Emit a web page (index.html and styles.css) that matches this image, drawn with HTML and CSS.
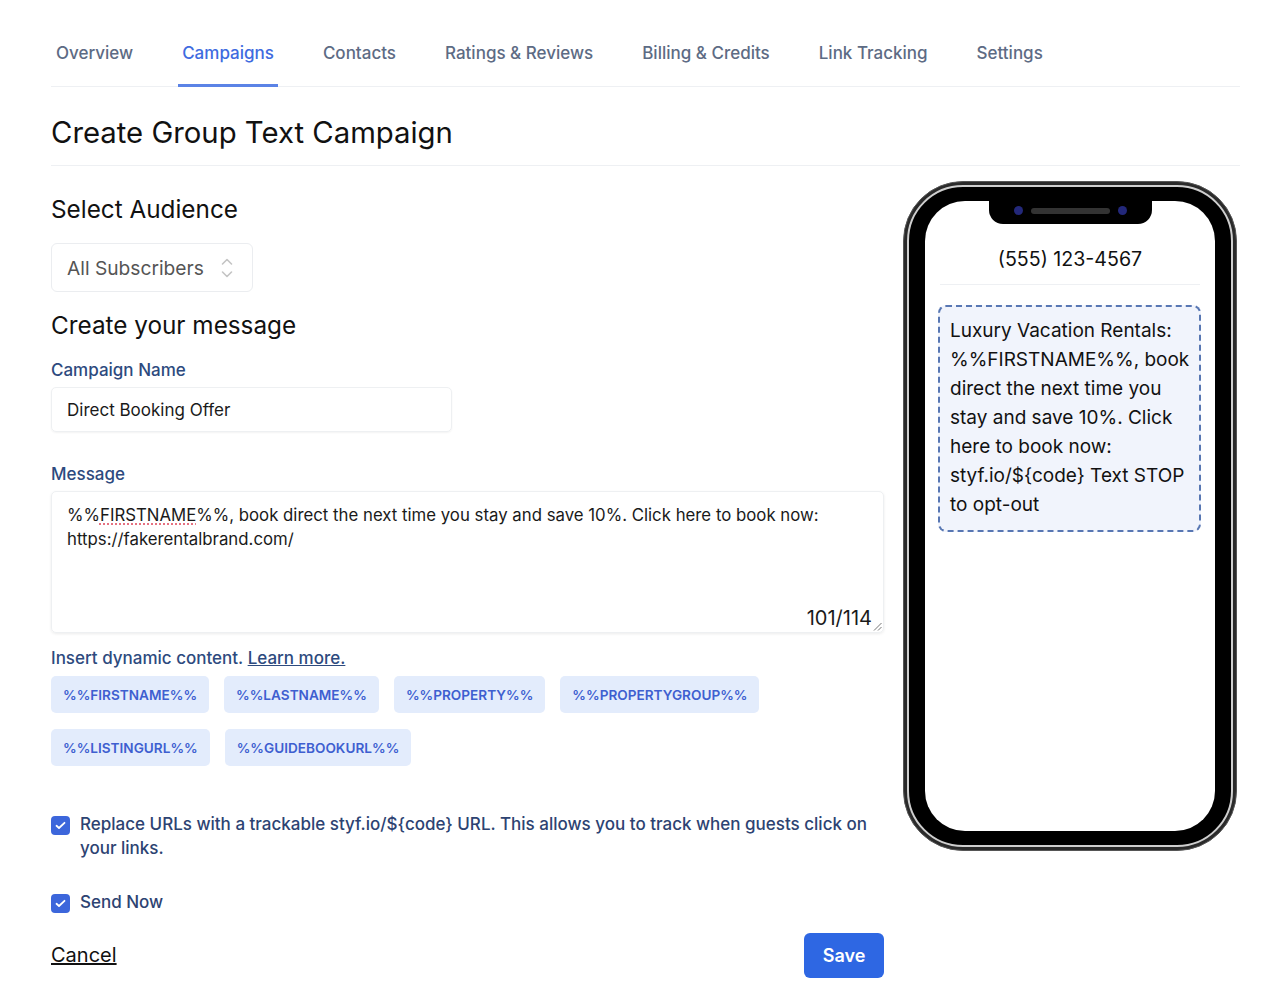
FILE: index.html
```html
<!DOCTYPE html>
<html lang="en">

<head>
    <meta charset="UTF-8">
    <title>Create Group Text Campaign</title>
    <link rel="stylesheet" href="styles.css">
</head>

<body>
    <div class="page">
        <ul class="tabs">
            <li>Overview</li>
            <li class="active">Campaigns</li>
            <li>Contacts</li>
            <li>Ratings &amp; Reviews</li>
            <li>Billing &amp; Credits</li>
            <li>Link Tracking</li>
            <li>Settings</li>
        </ul>

        <h1 class="title">Create Group Text Campaign</h1>

        <div class="content">
            <div class="form">
                <h2>Select Audience</h2>
                <div class="select">
                    <span>All Subscribers</span>
                    <svg width="12" height="22" viewBox="0 0 12 22" fill="none" stroke="#c4c4c4" stroke-width="1.6" stroke-linecap="round" stroke-linejoin="round">
                        <polyline points="1.5,7 6,2.5 10.5,7"></polyline>
                        <polyline points="1.5,15 6,19.5 10.5,15"></polyline>
                    </svg>
                </div>

                <h2 class="sub">Create your message</h2>
                <label class="label">Campaign Name</label>
                <div class="input">Direct Booking Offer</div>

                <label class="label msg-label">Message</label>
                <div class="textarea">
                    <p>%%<span class="spell">FIRSTNAME</span>%%, book direct the next time you stay and save 10%. Click here to book now: https://fakerentalbrand.com/</p>
                    <div class="counter">
                        <span>101/114</span>
                        <svg width="10" height="10" viewBox="0 0 10 10" stroke="#777" stroke-width="1">
                            <line x1="9.5" y1="2" x2="2" y2="9.5"></line>
                            <line x1="9.5" y1="6" x2="6" y2="9.5"></line>
                        </svg>
                    </div>
                </div>

                <p class="hint">Insert dynamic content. <a href="#">Learn more.</a></p>
                <div class="chips">
                    <span class="chip">%%FIRSTNAME%%</span>
                    <span class="chip">%%LASTNAME%%</span>
                    <span class="chip">%%PROPERTY%%</span>
                    <span class="chip">%%PROPERTYGROUP%%</span>
                    <span class="chip">%%LISTINGURL%%</span>
                    <span class="chip">%%GUIDEBOOKURL%%</span>
                </div>

                <div class="check first">
                    <span class="box">
                        <svg width="11" height="9" viewBox="0 0 11 9" fill="none" stroke="#fff" stroke-width="1.8" stroke-linecap="round" stroke-linejoin="round"><polyline points="1.5,4.8 4,7 9.5,1.8"></polyline></svg>
                    </span>
                    <span>Replace URLs with a trackable styf.io/${code} URL. This allows you to track when guests click on your links.</span>
                </div>
                <div class="check second">
                    <span class="box">
                        <svg width="11" height="9" viewBox="0 0 11 9" fill="none" stroke="#fff" stroke-width="1.8" stroke-linecap="round" stroke-linejoin="round"><polyline points="1.5,4.8 4,7 9.5,1.8"></polyline></svg>
                    </span>
                    <span>Send Now</span>
                </div>

                <div class="actions">
                    <a href="#" class="cancel">Cancel</a>
                    <button class="save">Save</button>
                </div>
            </div>

            <div class="phone">
                <div class="rim">
                    <div class="screen">
                        <div class="notch">
                            <span class="cam"></span>
                            <span class="speaker"></span>
                            <span class="cam"></span>
                        </div>
                        <div class="number">(555) 123-4567</div>
                        <div class="bubble">Luxury Vacation Rentals: %%FIRSTNAME%%, book direct the next time you stay and save 10%. Click here to book now: styf.io/${code} Text STOP to opt-out</div>
                    </div>
                </div>
            </div>
        </div>
    </div>
</body>

</html>
```

FILE: styles.css
```css
* {
    margin: 0;
    padding: 0;
    box-sizing: border-box;
}

body {
    font-family: Inter, "Liberation Sans", sans-serif;
    color: #1a1a1a;
    background: #fff;
}

.page {
    padding: 0 45px 0 51px;
}

/* tabs */
.tabs {
    list-style: none;
    display: flex;
    gap: 41px;
    padding-left: 1px;
    border-bottom: 1px solid #eef0f3;
}

.tabs li {
    padding: 43px 4px 20px;
    font-size: 17px;
    line-height: 21px;
    font-weight: 500;
    color: #5d6b84;
    border-bottom: 3px solid transparent;
    margin-bottom: -1px;
}

.tabs li.active {
    color: #3e6be0;
    border-bottom-color: #5b83e6;
}

.title {
    margin-top: 28px;
    padding-bottom: 14px;
    font-size: 29.3px;
    line-height: 36px;
    font-weight: 400;
    color: #111;
    border-bottom: 1px solid #eef0f3;
}

.content {
    display: flex;
    gap: 19px;
    align-items: flex-start;
}

.form {
    width: 833px;
    padding-top: 28px;
}

h2 {
    font-size: 24.3px;
    line-height: 30px;
    font-weight: 400;
    color: #111;
}

.select {
    margin-top: 19px;
    width: 202px;
    height: 49px;
    border: 1px solid #ebedf0;
    border-radius: 6px;
    display: flex;
    align-items: center;
    justify-content: space-between;
    padding: 0 19px 0 15px;
    font-size: 19.2px;
    color: #555;
}

.sub {
    margin-top: 18px;
}

.label {
    display: block;
    margin-top: 19px;
    font-size: 17px;
    line-height: 22px;
    font-weight: 500;
    color: #2d4a7e;
}

.msg-label {
    margin-top: 31px;
}

.input {
    margin-top: 6px;
    width: 401px;
    height: 45px;
    border: 1px solid #eef0f2;
    border-radius: 5px;
    box-shadow: 0 1px 2px rgba(0, 0, 0, 0.05);
    padding: 0 15px;
    display: flex;
    align-items: center;
    font-size: 17px;
    color: #1a1a1a;
}

.textarea {
    margin-top: 6px;
    height: 142px;
    border: 1px solid #eef0f2;
    border-radius: 5px;
    box-shadow: 0 1px 3px rgba(0, 0, 0, 0.08);
    padding: 11px 1px 0 15px;
    display: flex;
    flex-direction: column;
    font-size: 16.8px;
    line-height: 24px;
    color: #1a1a1a;
}

.spell {
    text-decoration: underline dotted #e0576a;
    text-underline-offset: 3px;
}

.counter {
    margin-top: auto;
    display: flex;
    justify-content: flex-end;
    align-items: flex-end;
    font-size: 20px;
    line-height: 24px;
    padding-bottom: 1px;
}

.counter span {
    margin-bottom: 1px;
}

.hint {
    margin-top: 14px;
    font-size: 17px;
    line-height: 22px;
    font-weight: 500;
    color: #2d4a7e;
}

.hint a {
    color: #2d4a7e;
}

.chips {
    margin-top: 7px;
    display: flex;
    flex-wrap: wrap;
    gap: 16px 15px;
    width: 760px;
}

.chip {
    height: 37px;
    padding: 0 12px;
    display: flex;
    align-items: center;
    border-radius: 5px;
    background: #e3ecfc;
    color: #3e5fd0;
    font-size: 13.6px;
    font-weight: 600;
}

.check {
    display: flex;
    gap: 10px;
    font-size: 17px;
    line-height: 24px;
    font-weight: 500;
    color: #2d4372;
}

.check.first {
    margin-top: 46px;
    padding-right: 10px;
}

.check.second {
    margin-top: 30px;
}

.box {
    flex: none;
    width: 19px;
    height: 19px;
    margin-top: 4px;
    border-radius: 4px;
    background: #3c66db;
    display: flex;
    align-items: center;
    justify-content: center;
}

.actions {
    margin-top: 19px;
    display: flex;
    justify-content: space-between;
    align-items: center;
}

.cancel {
    font-size: 20px;
    color: #111;
    margin-top: -2px;
}

.save {
    width: 80px;
    height: 45px;
    border: none;
    border-radius: 6px;
    background: #2e67e3;
    color: #fff;
    font-family: inherit;
    font-size: 18px;
    font-weight: 600;
}

/* phone */
.phone {
    margin-top: 15px;
    width: 334px;
    height: 670px;
    border-radius: 60px;
    border: 1px solid #555;
    background: #2a2a2a;
    padding: 3px;
}

.rim {
    height: 100%;
    border-radius: 56px;
    border: 2px solid #cfcfcf;
    background: #000;
    padding: 14px 16px;
}

.screen {
    height: 100%;
    border-radius: 40px;
    background: #fff;
    display: flex;
    flex-direction: column;
    align-items: center;
}

.notch {
    width: 163px;
    height: 23px;
    background: #000;
    border-radius: 0 0 14px 14px;
    display: flex;
    align-items: center;
    padding: 0 25px 4px 25px;
    gap: 8px;
}

.cam {
    width: 9px;
    height: 9px;
    border-radius: 50%;
    background: #23287a;
}

.speaker {
    flex: 1;
    height: 6px;
    border-radius: 3px;
    background: #333;
}

.number {
    align-self: stretch;
    margin: 23px 15px 0;
    padding-bottom: 13px;
    border-bottom: 1px solid #eef0f3;
    text-align: center;
    font-size: 19.6px;
    line-height: 24px;
    color: #111;
}

.bubble {
    align-self: stretch;
    margin: 20px 14px 0 13px;
    border: 2px dashed #5877b3;
    border-radius: 8px;
    background: #f1f4fc;
    padding: 9px 5px 11px 10px;
    font-size: 19px;
    line-height: 29px;
    color: #111;
}
```
